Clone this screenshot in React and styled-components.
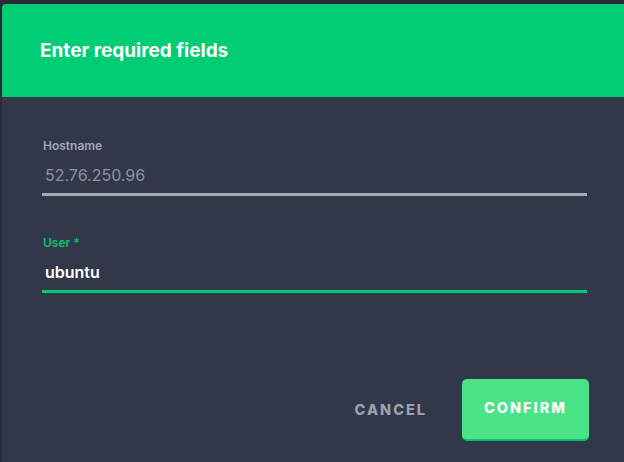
import React from 'react';
import styled, { createGlobalStyle } from 'styled-components';

const GlobalStyle = createGlobalStyle`
  html, body {
    margin: 0;
    padding: 0;
    background: #292c37;
    font-family: "Inter", "Noto Sans", sans-serif;
  }
`;

const Page = styled.div`
  padding: 4px 0 0 2px;
  height: 462px;
  box-sizing: border-box;
`;

const Dialog = styled.div`
  height: 458px;
  background: #323749;
  border-radius: 4px 0 0 0;
  overflow: hidden;
  display: flex;
  flex-direction: column;
`;

const Header = styled.div`
  height: 93px;
  background: #00cc74;
  display: flex;
  align-items: center;
  padding-left: 38px;
`;

const Title = styled.h2`
  margin: 0;
  color: #ffffff;
  font-size: 19px;
  font-weight: 700;
`;

const Body = styled.div`
  padding: 41px 37px 0 40px;
  display: flex;
  flex-direction: column;
  gap: 39px;
`;

const Field = styled.div`
  display: flex;
  flex-direction: column;
`;

const Label = styled.label`
  font-size: 12px;
  line-height: 15px;
  font-weight: 600;
  color: ${({ active }) => (active ? '#00c46f' : '#a0a6b3')};
  margin-left: 1px;
`;

const Value = styled.div`
  font-size: 16px;
  line-height: 20px;
  font-weight: ${({ active }) => (active ? 600 : 400)};
  color: ${({ active }) => (active ? '#ffffff' : '#8e929c')};
  padding: 12px 3px 8px;
  border-bottom: 3px solid ${({ active }) => (active ? '#00cc74' : '#a4acb8')};
`;

const Actions = styled.div`
  margin-top: auto;
  display: flex;
  justify-content: flex-end;
  align-items: center;
  gap: 35px;
  padding: 0 35px 21px 0;
`;

const Button = styled.button`
  font-family: inherit;
  font-size: 14.5px;
  font-weight: 800;
  letter-spacing: 2px;
  border: none;
  cursor: pointer;
  color: ${({ primary }) => (primary ? '#ffffff' : '#9aa0b0')};
  background: ${({ primary }) => (primary ? '#4ae388' : 'transparent')};
  border-bottom: ${({ primary }) => (primary ? '2px solid #00c46f' : 'none')};
  border-radius: 5px;
  width: ${({ primary }) => (primary ? '127px' : 'auto')};
  height: ${({ primary }) => (primary ? '62px' : 'auto')};
  padding: ${({ primary }) => (primary ? '0 0 3px' : '0 0 2px')};
`;

export default function App() {
  return (
    <Page>
      <GlobalStyle />
      <Dialog>
        <Header>
          <Title>Enter required fields</Title>
        </Header>
        <Body>
          <Field>
            <Label>Hostname</Label>
            <Value>52.76.250.96</Value>
          </Field>
          <Field>
            <Label active>User *</Label>
            <Value active>ubuntu</Value>
          </Field>
        </Body>
        <Actions>
          <Button>CANCEL</Button>
          <Button primary>CONFIRM</Button>
        </Actions>
      </Dialog>
    </Page>
  );
}
